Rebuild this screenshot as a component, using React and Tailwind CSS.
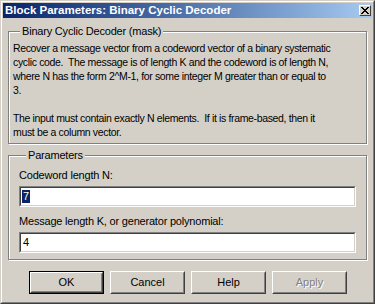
import React from 'react';

const Btn = ({ children, isDefault, disabled }) => {
  const inner = (
    <div className="h-full w-full border border-t-white border-l-white border-r-[#404040] border-b-[#404040]">
      <div
        className={`h-full w-full flex items-center justify-center border border-t-[#d4d0c8] border-l-[#d4d0c8] border-r-[#808080] border-b-[#808080] ${
          disabled ? 'text-[#808080] [text-shadow:1px_1px_0_#fff]' : 'text-black'
        }`}
      >
        {children}
      </div>
    </div>
  );
  return (
    <div className={`w-[75px] h-[23px] ${isDefault ? 'border border-black' : ''}`}>
      {inner}
    </div>
  );
};

const EditBox = ({ children }) => (
  <div className="w-[337px] h-[21px] border border-t-[#808080] border-l-[#808080] border-r-white border-b-white">
    <div className="h-full w-full bg-white border border-t-[#404040] border-l-[#404040] border-r-[#d4d0c8] border-b-[#d4d0c8] flex items-center pl-[1px]">
      {children}
    </div>
  </div>
);

export default function App() {
  return (
    <div className="w-[375px] h-[304px] bg-[#d4d0c8] flex flex-col border border-t-[#d4d0c8] border-l-[#d4d0c8] border-r-[#404040] border-b-[#404040] font-['Liberation_Sans',Arial,sans-serif] text-[10.5px] tracking-[-0.35px] leading-[13px] text-black">
      <div className="flex-1 flex flex-col border border-t-white border-l-white border-r-[#808080] border-b-[#808080] p-px">
        {/* title bar */}
        <div className="h-[15px] flex items-center justify-between bg-gradient-to-r from-[#0a246a] to-[#a6caf0] pl-[2px] pr-[1px]">
          <span className="font-bold text-white text-[11.5px] tracking-normal leading-[15px] whitespace-nowrap">
            Block Parameters: Binary Cyclic Decoder
          </span>
          <div className="w-[12px] h-[11px] bg-[#d4d0c8] border border-t-white border-l-white border-r-[#404040] border-b-[#404040] flex items-center justify-center">
            <svg width="8" height="7" viewBox="0 0 8 7" shapeRendering="crispEdges">
              <path d="M0 0h2v1H0zM6 0h2v1H6zM1 1h2v1H1zM5 1h2v1H5zM2 2h4v1H2zM3 3h2v1H3zM2 4h4v1H2zM1 5h2v1H1zM5 5h2v1H5zM0 6h2v1H0zM6 6h2v1H6z" fill="#000" />
            </svg>
          </div>
        </div>

        {/* description group */}
        <fieldset className="ml-[5px] mt-[7px] w-[359px] h-[119px] border border-[#808080] shadow-[1px_1px_0_#fff,inset_1px_1px_0_#fff] pl-[4px] pt-[3px]">
          <legend className="ml-[7px] px-[2px] bg-[#d4d0c8] text-[11px] tracking-[-0.2px]">Binary Cyclic Decoder (mask)</legend>
          <p className="whitespace-nowrap leading-[14px]">
            Recover a message vector from a codeword vector of a binary systematic
            <br />
            cyclic code.&nbsp; The message is of length K and the codeword is of length N,
            <br />
            where N has the form 2^M-1, for some integer M greater than or equal to
            <br />
            3.
            <br />
            <br />
            The input must contain exactly N elements.&nbsp; If it is frame-based, then it
            <br />
            must be a column vector.
          </p>
        </fieldset>

        {/* parameters group */}
        <fieldset className="ml-[5px] mt-[5px] w-[359px] h-[111px] border border-[#808080] shadow-[1px_1px_0_#fff,inset_1px_1px_0_#fff] pl-[10px] pt-[7px]">
          <legend className="ml-[7px] px-[2px] bg-[#d4d0c8] text-[11px] tracking-[-0.2px]">Parameters</legend>
          <div className="text-[11px] tracking-[-0.2px]">Codeword length N:</div>
          <div className="mt-[4px]">
            <EditBox>
              <span className="bg-[#0a246a] text-white px-[1px] text-[11px]">7</span>
            </EditBox>
          </div>
          <div className="mt-[8px] text-[11px] tracking-[-0.2px]">Message length K, or generator polynomial:</div>
          <div className="mt-[4px]">
            <EditBox>
              <span className="px-[1px] text-[11px]">4</span>
            </EditBox>
          </div>
        </fieldset>

        {/* buttons */}
        <div className="flex gap-[6px] pl-[26px] mt-[11px] text-[11px] tracking-normal">
          <Btn isDefault>OK</Btn>
          <Btn>Cancel</Btn>
          <Btn>Help</Btn>
          <Btn disabled>Apply</Btn>
        </div>
      </div>
    </div>
  );
}
